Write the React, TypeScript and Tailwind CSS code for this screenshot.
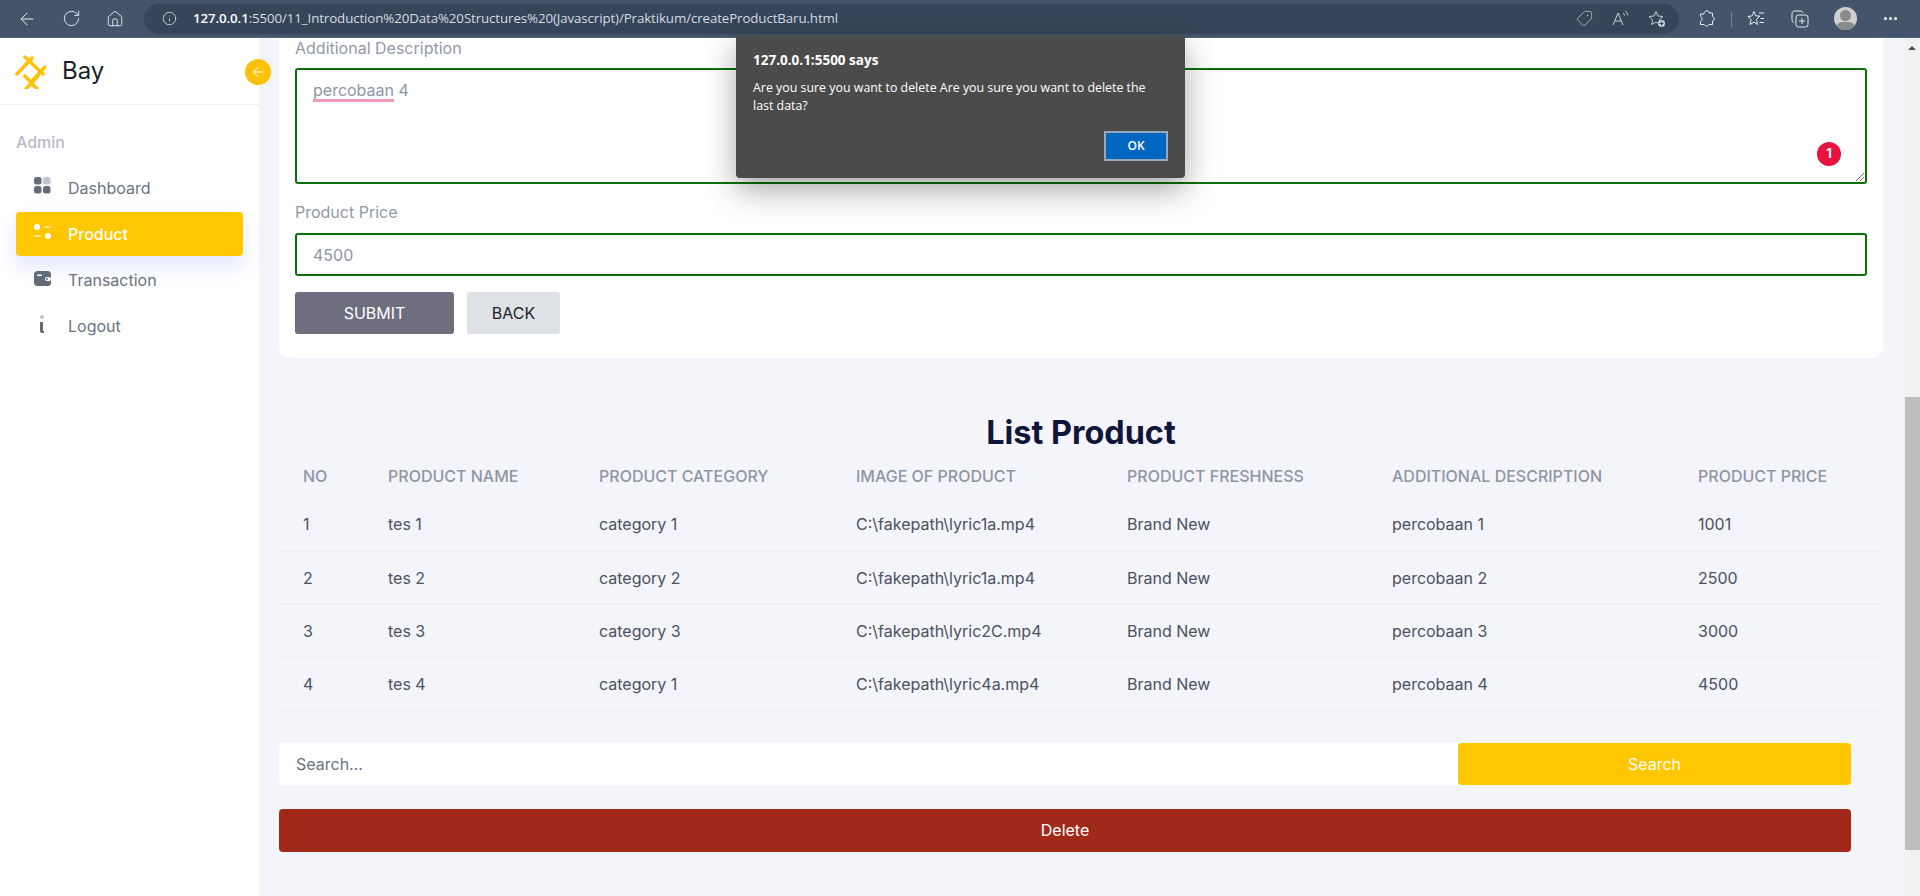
import { ArrowLeft, House, Info, RotateCw, Tag } from "lucide-react";

const rows = [
  ["1", "tes 1", "category 1", "C:\\fakepath\\lyric1a.mp4", "Brand New", "percobaan 1", "1001"],
  ["2", "tes 2", "category 2", "C:\\fakepath\\lyric1a.mp4", "Brand New", "percobaan 2", "2500"],
  ["3", "tes 3", "category 3", "C:\\fakepath\\lyric2C.mp4", "Brand New", "percobaan 3", "3000"],
  ["4", "tes 4", "category 1", "C:\\fakepath\\lyric4a.mp4", "Brand New", "percobaan 4", "4500"],
];

const headers = [
  "No",
  "Product Name",
  "Product Category",
  "Image of Product",
  "Product Freshness",
  "Additional Description",
  "Product Price",
];

const BrowserBar = () => (
  <div className="h-[38px] shrink-0 flex items-center bg-[#44546a] border-b border-[#56657a] text-[#e8ecf1] font-['Open_Sans',sans-serif]">
    <div className="w-[144px] shrink-0 flex items-center pl-[17px] gap-[25px]">
      <ArrowLeft size={20} strokeWidth={1.2} />
      <RotateCw size={19} strokeWidth={1.2} />
      <House size={18} strokeWidth={1.2} />
    </div>
    <div className="w-[1535px] h-[30px] rounded-full bg-[#364559] flex items-center pl-[18px] pr-[13px]">
      <Info size={15} strokeWidth={1.2} />
      <span className="ml-[16px] text-[13.3px] tracking-[-0.1px]">
        <span className="text-white font-semibold">127.0.0.1</span>
        <span className="text-[#d5dbe3]">:5500/11_Introduction%20Data%20Structures%20(Javascript)/Praktikum/createProductBaru.html</span>
      </span>
      <div className="ml-auto flex items-center gap-[19px] text-[#c5ccd6]">
        <Tag size={17} strokeWidth={1} className="rotate-90" />
        <svg width="17" height="17" viewBox="0 0 17 17" fill="none" stroke="currentColor" strokeWidth="1">
          <path d="M1 15 6 3l5 12M3 11h6M11 3c1 .6 1.600 1.500 1.800 2.600M13 1c1.600 1 2.600 2.500 2.800 4.400" />
        </svg>
        <svg width="18" height="18" viewBox="0 0 18 18" fill="none" stroke="currentColor" strokeWidth="1">
          <path d="M8 1.500 10 6l5 .5-3.600 3.300 1 4.700L8 12l-4.400 2.500 1-4.700L1 6.500 6 6z" />
          <circle cx="13.500" cy="13.500" r="3.500" fill="#c5ccd6" stroke="none" />
          <path d="M13.500 11.500v4M11.500 13.500h4" stroke="#364559" />
        </svg>
      </div>
    </div>
    <div className="flex-1 flex items-center pl-[20px]">
      <svg width="16" height="17" viewBox="0 0 16 17" fill="none" stroke="currentColor" strokeWidth="1">
        <path d="M6 1.500c1-1 3-1 4 .5v1h3.500v3.500c2 .3 2.500 3.500 0 4.500v3.500H10c-1 2-4 2-5 0H1.500v-3c2-1 2-4 0-5V4H5c0-1 .3-2 1-2.500z" />
      </svg>
      <div className="w-px h-[16px] bg-[#718096] ml-[16px]" />
      <svg className="ml-[15px]" width="18" height="17" viewBox="0 0 18 17" fill="none" stroke="currentColor" strokeWidth="1">
        <path d="M7 1.500 9 6H13L9.500 9.500l1 5L7 12l-4 2.500 1-5L1 6.500 5 6zM12 3h5M13.500 8.500H17M12.500 12.500H17" />
      </svg>
      <svg className="ml-[26px]" width="18" height="18" viewBox="0 0 18 18" fill="none" stroke="currentColor" strokeWidth="1">
        <path d="M3 13C1.500 12 1 11 1 9V4c0-2 1-3 3-3h5c1.500 0 2.500.5 3 2" />
        <rect x="5" y="5" width="12" height="12" rx="2.500" />
        <path d="M11 8v6M8 11h6" />
      </svg>
      <div className="ml-[25px] w-[23px] h-[23px] rounded-full bg-[#cfcfcf] relative overflow-hidden">
        <div className="absolute left-[6px] top-[3px] w-[11px] h-[11px] rounded-full bg-[#8a8a8a]" />
        <div className="absolute left-[2px] top-[15px] w-[19px] h-[12px] rounded-full bg-[#8a8a8a]" />
      </div>
      <span className="ml-[27px] flex gap-[2px]">
        <i className="block w-[3px] h-[3px] rounded-full bg-white" />
        <i className="block w-[3px] h-[3px] rounded-full bg-white" />
        <i className="block w-[3px] h-[3px] rounded-full bg-white" />
      </span>
    </div>
  </div>
);

const Logo = () => (
  <svg width="32" height="36" viewBox="4 4 32 36" fill="none" stroke="#ffc107" strokeWidth="3.500" strokeLinecap="round">
    <path d="M7 25 22 9M15 8l18 17M21 33l14-15M15 27l12 13M16 40l12-13" />
  </svg>
);

const Sidebar = () => (
  <aside className="w-[259px] shrink-0 bg-white">
    <div className="h-[67px] flex items-center pl-[14px] pb-[1px] border-b border-[#eceef2]">
      <Logo />
      <span className="ml-[16px] text-[24px] text-[#1b1f2a]">Bay</span>
    </div>
    <div className="px-[16px] pt-[27px]">
      <div className="text-[16px] font-medium text-[#b7bbc6] leading-[20px]">Admin</div>
      <nav className="mt-[13px] flex flex-col text-[16px] text-[#6b7280]">
        <div className="h-[45px] mb-[2px] flex items-center pl-[18px]">
          <svg width="17" height="17" viewBox="0 0 17 17" className="mt-[-4px]">
            <rect x="0" y="0" width="7.500" height="7.500" rx="2.500" fill="#636b78" />
            <rect x="9" y="0" width="7.500" height="7.500" rx="2.500" fill="#c0c4cc" />
            <rect x="0" y="9" width="7.500" height="7.500" rx="2.500" fill="#636b78" />
            <rect x="9" y="9" width="7.500" height="7.500" rx="2.500" fill="#636b78" />
          </svg>
          <span className="ml-[17px]">Dashboard</span>
        </div>
        <div className="h-[44px] flex items-center pl-[18px] rounded-[4px] bg-[#ffc700] text-white shadow-[0_10px_20px_rgba(90,110,230,0.18)]">
          <svg width="17" height="16" viewBox="0 0 17 16" className="mt-[-4px]">
            <circle cx="3" cy="3" r="3" fill="#fff" />
            <rect x="10" y="2" width="7" height="2" rx="1" fill="#ffe58a" />
            <rect x="0" y="11" width="7" height="2" rx="1" fill="#ffe58a" />
            <circle cx="14" cy="12" r="3" fill="#fff" />
          </svg>
          <span className="ml-[17px] font-medium">Product</span>
        </div>
        <div className="h-[48px] flex items-center pl-[18px]">
          <svg width="17" height="15" viewBox="0 0 17 15" className="mt-[-4px]">
            <rect width="17" height="15" rx="3.500" fill="#636b78" />
            <rect x="3" y="3.500" width="5" height="1.500" fill="#fff" />
            <rect x="11" y="6" width="6" height="4" rx="2" fill="#fff" />
            <circle cx="13" cy="8" r="1" fill="#636b78" />
          </svg>
          <span className="ml-[17px]">Transaction</span>
        </div>
        <div className="h-[44px] flex items-center pl-[18px]">
          <svg width="17" height="18" viewBox="0 0 17 18" className="mt-[-4px]">
            <circle cx="8" cy="2" r="2" fill="#c0c4cc" />
            <path d="M6 7h3v8c0 .8.4 1 1 1v2H8c-1.400 0-2-.8-2-2z" fill="#636b78" />
          </svg>
          <span className="ml-[17px]">Logout</span>
        </div>
      </nav>
    </div>
  </aside>
);

const Alert = () => (
  <div className="absolute left-[736px] top-[35px] w-[449px] h-[143px] rounded-[4px] bg-[#4b4b4b] text-white font-['Open_Sans',sans-serif] shadow-[0_12px_32px_rgba(0,0,0,0.35)] pl-[17px] pr-[17px] pt-[16px]">
    <div className="text-[13.500px] font-bold leading-[18px]">127.0.0.1:5500 says</div>
    <p className="mt-[10px] text-[12.400px] leading-[18px] w-[400px]">
      Are you sure you want to delete Are you sure you want to delete the last data?
    </p>
    <div className="flex justify-end mt-[16px]">
      <button className="w-[64px] h-[30px] bg-[#0067c0] border-2 border-[#9aa7b8] text-[12px] font-semibold">
        OK
      </button>
    </div>
  </div>
);

export default function App() {
  return (
    <div className="relative h-[896px] w-[1920px] overflow-hidden flex flex-col font-['Inter',sans-serif] bg-[#f4f5fa]">
      <BrowserBar />
      <div className="flex-1 flex min-h-0">
        <Sidebar />
        <main className="flex-1 min-w-0 px-[20px]">
          <div className="h-[320px] rounded-b-[10px] bg-white px-[16px]">
            <label className="block text-[16px] leading-[20px] text-[#9299a6]">Additional Description</label>
            <div className="relative mt-[10px] h-[116px] rounded-[3px] border-2 border-[#0a700a] px-[16px] py-[10px] text-[16px] leading-[20px] text-[#8f96a3]">
              <span className="underline decoration-[#f49ab4] decoration-[3px] underline-offset-[3px]">percobaan</span> 4
              <svg className="absolute right-[1px] bottom-[1px]" width="9" height="9" viewBox="0 0 9 9" stroke="#555" strokeWidth="0.800">
                <path d="M1 9 9 1M5 9l4-4" />
              </svg>
            </div>
            <label className="block mt-[18px] text-[16px] leading-[20px] text-[#9299a6]">Product Price</label>
            <div className="mt-[11px] h-[43px] rounded-[3px] border-2 border-[#0a700a] px-[16px] flex items-center text-[16px] text-[#8f96a3]">4500</div>
            <div className="mt-[16px] flex gap-[13px] text-[16px]">
              <button className="w-[159px] h-[42px] rounded-[3px] bg-[#6f6e7e] text-white">SUBMIT</button>
              <button className="w-[93px] h-[42px] rounded-[3px] bg-[#dee1e6] text-[#1d2129]">BACK</button>
            </div>
          </div>
          <h1 className="mt-[55px] h-[40px] text-center text-[32.400px] leading-[40px] font-bold text-[#10153a]">List Product</h1>
          <table className="w-[1604px] table-fixed text-left text-[16px]">
            <colgroup>
              <col className="w-[85px]" />
              <col className="w-[211px]" />
              <col className="w-[257px]" />
              <col className="w-[271px]" />
              <col className="w-[265px]" />
              <col className="w-[306px]" />
              <col />
            </colgroup>
            <thead>
              <tr className="h-[45px]">
                {headers.map((h) => (
                  <th key={h} className="pl-[24px] font-medium uppercase text-[#8f96a3]">{h}</th>
                ))}
              </tr>
            </thead>
            <tbody>
              {rows.map((r) => (
                <tr key={r[0]} className="h-[53px] border-b border-[#eceef3]">
                  {r.map((c, i) => (
                    <td key={i} className="pl-[24px] text-[#4b5160]">{c}</td>
                  ))}
                </tr>
              ))}
            </tbody>
          </table>
          <div className="mt-[32px] w-[1572px] flex h-[42px] text-[16px]">
            <div className="flex-1 bg-white rounded-l-[4px] pl-[17px] flex items-center text-[#6b7280]">Search...</div>
            <button className="w-[393px] bg-[#ffc700] rounded-[4px] text-white">Search</button>
          </div>
          <button className="mt-[24px] w-[1572px] h-[43px] rounded-[4px] bg-[#a0291a] text-white text-[16px]">Delete</button>
        </main>
        <div className="w-[17px] shrink-0 bg-[#f1f1f1] relative">
          <div className="absolute left-[5px] top-[8px] w-0 h-0 border-x-[4px] border-x-transparent border-b-[4px] border-b-[#505050]" />
          <div className="absolute left-[2px] right-0 top-[359px] h-[453px] bg-[#bdbdbd]" />
        </div>
      </div>
      <button className="absolute left-[245px] top-[59px] w-[26px] h-[26px] rounded-full bg-[#ffc107] text-white flex items-center justify-center">
        <ArrowLeft size={16} strokeWidth={1.5} />
      </button>
      <div className="absolute left-[1817px] top-[142px] w-[24px] h-[24px] rounded-full bg-[#e8133f] text-white text-[13px] font-bold flex items-center justify-center">1</div>
      <Alert />
    </div>
  );
}
